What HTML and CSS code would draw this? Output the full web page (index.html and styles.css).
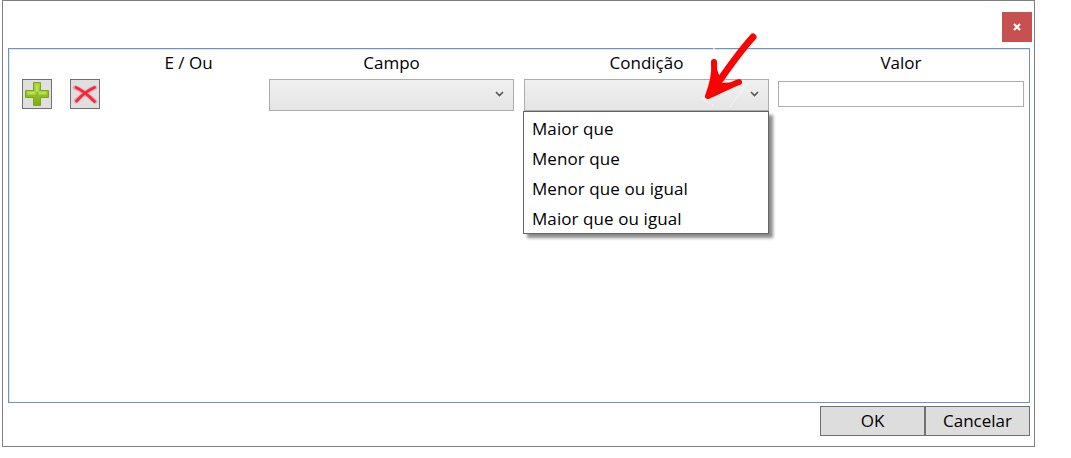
FILE: index.html
```html
<!DOCTYPE html>
<html lang="pt">
<head>
<meta charset="utf-8">
<title>Filtro</title>
<link rel="stylesheet" href="styles.css">
</head>
<body>
<div class="window">
  <div class="titlebar">
    <button class="close" aria-label="Fechar">
      <svg width="8" height="8" viewBox="0 0 8 8"><path d="M1 1L7 7M7 1L1 7" stroke="#fff" stroke-width="2.200" fill="none"/></svg>
    </button>
  </div>
  <div class="panel">
    <div class="grid">
      <div class="head first">E / Ou</div>
      <div class="head">Campo</div>
      <div class="head">Condição</div>
      <div class="head last">Valor</div>
      <div class="actions">
        <button class="icon-btn" aria-label="Adicionar">
          <svg width="26" height="26" viewBox="0 0 26 26">
            <defs><linearGradient id="g" x1="0" y1="0" x2="0" y2="1"><stop offset="0" stop-color="#a5d22d"/><stop offset="1" stop-color="#7cae14"/></linearGradient></defs>
            <path d="M9.500 1.500h7v8h8v7h-8v8h-7v-8h-8v-7h8z" fill="url(#g)" stroke="#7da51c" stroke-width="1"/>
            <path d="M11.500 3.500h3v7h8v3h-8v-3h-3h-8v3h8z" fill="#c4e36c" opacity=".8"/>
          </svg>
        </button>
        <button class="icon-btn" aria-label="Remover">
          <svg width="26" height="26" viewBox="0 0 26 26">
            <path d="M3 6.500C10 9 17 15 23 20.500M23 6.500C16 9 10 14 4 20" stroke="#f4727c" stroke-width="4.600" stroke-linecap="round" fill="none" opacity=".5"/>
            <path d="M4 6.500C10 9 17 15 22.500 20.500M22.500 6.500C16 9 10 14 4.500 20" stroke="#f2283a" stroke-width="2.800" stroke-linecap="round" fill="none"/>
          </svg>
        </button>
      </div>
      <div class="select"><svg class="chev" width="9" height="6" viewBox="0 0 9 6"><path d="M1 1l3.500 3.500L8 1" stroke="#555" stroke-width="1.600" fill="none"/></svg></div>
      <div class="select open">
        <svg class="chev" width="9" height="6" viewBox="0 0 9 6"><path d="M1 1l3.500 3.500L8 1" stroke="#555" stroke-width="1.600" fill="none"/></svg>
        <ul class="menu">
          <li>Maior que</li>
          <li>Menor que</li>
          <li>Menor que ou igual</li>
          <li>Maior que ou igual</li>
        </ul>
      </div>
      <div class="input last"></div>
    </div>
  </div>
  <div class="footer">
    <button class="btn">OK</button>
    <button class="btn">Cancelar</button>
  </div>
  <svg class="arrow" width="60" height="80" viewBox="0 0 60 80">
    <path d="M0 67L12 75M28 76L46 51M12 17l0 1" stroke="#fff" stroke-width="1" stroke-dasharray="1.500 1.500" fill="none"/>
    <path d="M51 6C40 18 26 37 9 62" stroke="#fe0000" stroke-width="7" stroke-linecap="round" fill="none"/>
    <path d="M12 31C13 42 10 55 6 65C17 60 27 55 37 51" stroke="#fe0000" stroke-width="6" stroke-linecap="round" stroke-linejoin="round" fill="none"/>
    <path d="M13 33L6 65L36 51L20 52z" fill="#fe0000"/>
    <path d="M12 17.500v1" stroke="#fff"/>
  </svg>
</div>
</body>
</html>
```
FILE: styles.css
```css
* { box-sizing: border-box; }
html, body { margin: 0; padding: 0; background: #fff; }
body { font-family: "Open Sans", "Noto Sans", sans-serif; font-size: 17px; color: #000; }
button { font: inherit; color: inherit; padding: 0; margin: 0; }

.window {
  position: relative;
  width: 1033px;
  height: 447px;
  margin-left: 2px;
  border: 1px solid #7f7f7f;
  padding: 11px 1px 0 5px;
  background: #fff;
}
.titlebar { display: flex; justify-content: flex-end; height: 36px; }
.close {
  width: 30px;
  height: 30px;
  margin-right: 1px;
  border: 0;
  background: #c75050;
  display: flex;
  align-items: center;
  justify-content: center;
}
.panel {
  height: 355px;
  width: 1022px;
  border: 1px solid #6e93bd;
  box-shadow: inset 1px 1px 0 #dfe8f2;
  padding: 2px 5px 0 13px;
}
.grid {
  display: grid;
  grid-template-columns: 237px 245px 245px 246px;
  column-gap: 10px;
  grid-template-rows: 28px auto;
}
.head { text-align: center; line-height: 24px; }
.head.first { padding-left: 96px; }
.last { margin-left: -1px; width: 246px; }
.actions { display: flex; gap: 18px; }
.icon-btn {
  width: 30px;
  height: 30px;
  border: 1px solid #707070;
  background: #dfdfdf;
  display: flex;
  align-items: center;
  justify-content: center;
}
.select {
  position: relative;
  height: 32px;
  border: 1px solid #acacac;
  background: linear-gradient(#f0f0f0, #e5e5e5);
}
.chev { position: absolute; right: 9px; top: 11px; }
.input { height: 26px; margin-top: 2px; border: 1px solid #abadb3; background: #fff; }
.menu {
  position: absolute;
  z-index: 2;
  left: -2px;
  top: 31px;
  width: 246px;
  margin: 0;
  padding: 2px 0 0;
  list-style: none;
  height: 123px;
  border: 1px solid #646464;
  background: #fff;
  box-shadow: 4px 4px 3px rgba(0, 0, 0, .45);
}
.menu li { height: 30px; line-height: 30px; padding-left: 8px; letter-spacing: .08px; }
.footer { display: flex; justify-content: flex-end; padding-top: 3px; width: 1022px; }
.btn {
  width: 105px;
  height: 30px;
  border: 1px solid #707070;
  background: #dddddd;
  line-height: 28px;
}
.arrow { position: absolute; left: 699px; top: 30px; z-index: 3; }
```
